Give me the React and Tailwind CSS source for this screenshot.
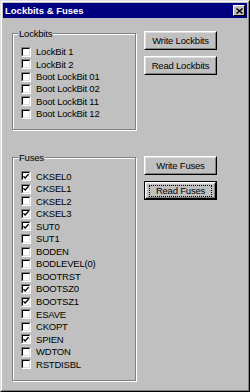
import React from "react";

const font = { fontFamily: '"Liberation Sans", Arial, sans-serif' };

function Check({ checked }) {
  return (
    <div className="w-[10px] h-[10px] shrink-0 border border-t-[#808080] border-l-[#808080] border-r-white border-b-white">
      <div className="w-full h-full bg-white border border-t-black border-l-black border-r-[#dfdfdf] border-b-[#dfdfdf] flex items-center justify-center">
        {checked && (
          <svg width="7" height="7" viewBox="0 0 7 7">
            <path d="M0.5 3.2 L2.5 5.3 L6.5 0.8" fill="none" stroke="black" strokeWidth="1.5" />
          </svg>
        )}
      </div>
    </div>
  );
}

function Row({ label, checked, h }) {
  return (
    <div className={`flex items-center ${h}`}>
      <Check checked={checked} />
      <span className="ml-[5px] text-[9.5px] tracking-[-0.2px] leading-none text-black whitespace-nowrap">{label}</span>
    </div>
  );
}

function Button({ children, def }) {
  const inner = (
    <div className="w-full h-full bg-[#c0c0c0] border border-t-white border-l-white border-r-black border-b-black">
      <div className="w-full h-full border border-t-[#dfdfdf] border-l-[#dfdfdf] border-r-[#808080] border-b-[#808080] flex items-center justify-center">
        {def ? (
          <div className="border border-dotted border-black text-[9.5px] tracking-[-0.2px] leading-none h-[12px] w-[63px] flex items-center justify-center">
            {children}
          </div>
        ) : (
          <span className="text-[9.5px] tracking-[-0.2px] leading-none">{children}</span>
        )}
      </div>
    </div>
  );
  if (def) {
    return <div className="w-[73px] h-[19px] border border-black">{inner}</div>;
  }
  return <div className="w-[73px] h-[19px]">{inner}</div>;
}

function Group({ title, className, children }) {
  return (
    <div className={`relative w-[124px] border border-[#808080] shadow-[inset_1px_1px_0_#fff,1px_1px_0_#fff] ${className}`}>
      <span className="absolute left-[5px] top-[-6px] px-[1px] bg-[#c0c0c0] text-[9.5px] tracking-[-0.2px] leading-[11px]">{title}</span>
      {children}
    </div>
  );
}

export default function App() {
  const lock = ["LockBit 1", "LockBit 2", "Boot LockBit 01", "Boot LockBit 02", "Boot LockBit 11", "Boot LockBit 12"];
  const fuses = [
    ["CKSEL0", true], ["CKSEL1", true], ["CKSEL2", false], ["CKSEL3", true], ["SUT0", true], ["SUT1", false],
    ["BODEN", false], ["BODLEVEL(0)", false], ["BOOTRST", false], ["BOOTSZ0", true], ["BOOTSZ1", true],
    ["ESAVE", false], ["CKOPT", false], ["SPIEN", true], ["WDTON", false], ["RSTDISBL", false],
  ];
  return (
    <div style={font} className="w-[250px] h-[392px] bg-[#c0c0c0] text-black border border-t-[#dfdfdf] border-l-[#dfdfdf] border-r-black border-b-black">
      <div className="w-full h-full border border-t-white border-l-white border-r-[#808080] border-b-[#808080] p-[1px] flex flex-col">
        <div className="h-[15px] bg-[#000080] flex items-center justify-between pl-[2px] pr-[2px]">
          <span className="text-white font-bold text-[9.5px] leading-none">Lockbits &amp; Fuses</span>
          <div className="w-[12px] h-[11px] bg-[#c0c0c0] border border-t-white border-l-white border-r-black border-b-black flex items-center justify-center">
            <svg width="7" height="6" viewBox="0 0 7 6">
              <path d="M0.5 0.5 L6.5 5.5 M6.5 0.5 L0.5 5.5" stroke="black" strokeWidth="1.4" />
            </svg>
          </div>
        </div>
        <div className="pl-[9px] flex flex-col">
          <div className="flex items-start mt-[13px]">
            <Group title="Lockbits" className="mt-[2px] h-[97px] pt-[12px] pl-[8px]">
              {lock.map((l) => (
                <Row key={l} label={l} checked={false} h="h-[12.3px]" />
              ))}
            </Group>
            <div className="ml-[8px] flex flex-col gap-[6px]">
              <Button>Write Lockbits</Button>
              <Button>Read Lockbits</Button>
            </div>
          </div>
          <div className="flex items-start mt-[26px]">
            <Group title="Fuses" className="mt-[1px] h-[224px] pt-[12px] pl-[8px]">
              {fuses.map(([l, c]) => (
                <Row key={l} label={l} checked={c} h="h-[12.55px]" />
              ))}
            </Group>
            <div className="ml-[8px] flex flex-col gap-[6px]">
              <Button>Write Fuses</Button>
              <Button def>Read Fuses</Button>
            </div>
          </div>
        </div>
      </div>
    </div>
  );
}
